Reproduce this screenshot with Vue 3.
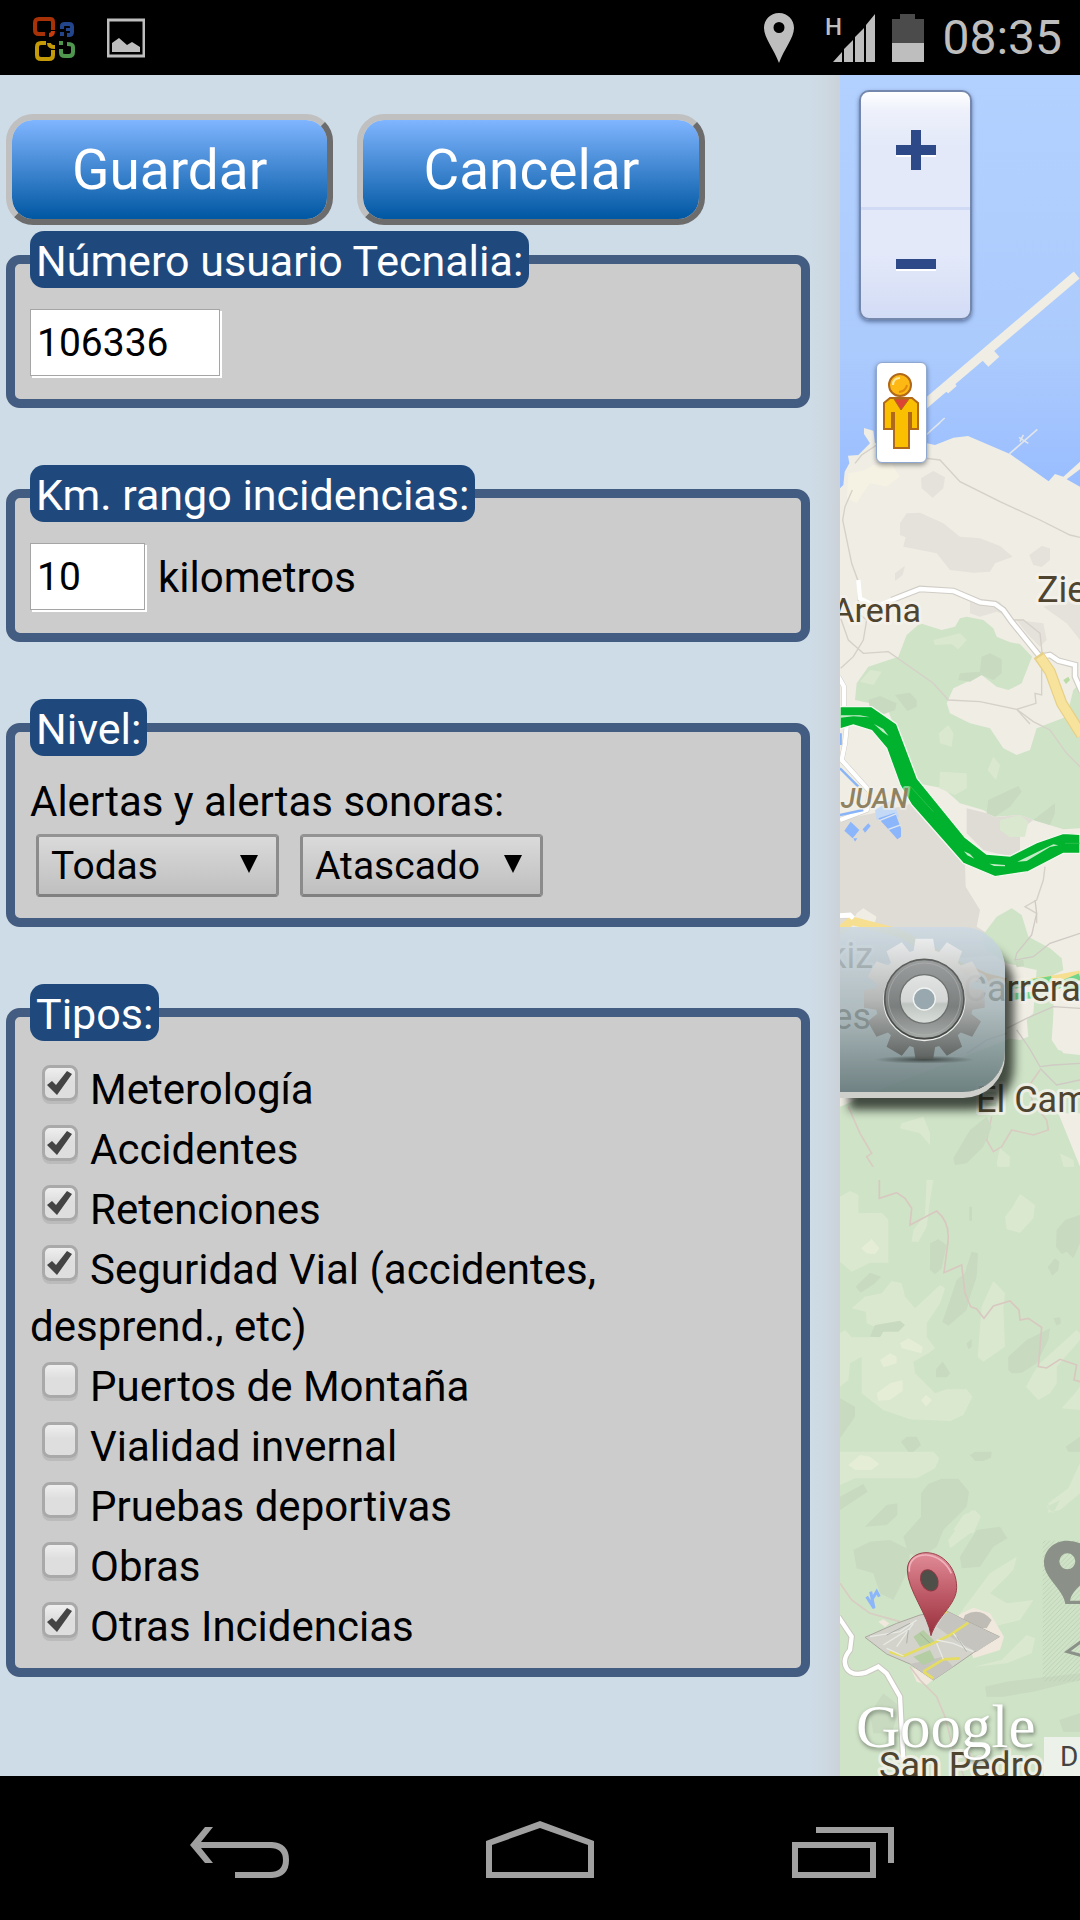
<script setup>
import { reactive, ref } from 'vue'

const usuario = ref('106336')
const rango = ref('10')
const alertas = ref('Todas')
const sonoras = ref('Atascado')

const tipos = reactive([
  { id: 'meteo', nombre: 'Meterología', activo: true },
  { id: 'accidentes', nombre: 'Accidentes', activo: true },
  { id: 'retenciones', nombre: 'Retenciones', activo: true },
  { id: 'seguridad', nombre: 'Seguridad Vial (accidentes,\ndesprend., etc)', activo: true },
  { id: 'puertos', nombre: 'Puertos de Montaña', activo: false },
  { id: 'invernal', nombre: 'Vialidad invernal', activo: false },
  { id: 'deportivas', nombre: 'Pruebas deportivas', activo: false },
  { id: 'obras', nombre: 'Obras', activo: false },
  { id: 'otras', nombre: 'Otras Incidencias', activo: true },
])

// Twelve-tooth gear outline around the origin
function gearPath(teeth, outer, root) {
  const pts = []
  const at = (r, a) => `${(r * Math.sin(a)).toFixed(1)},${(-r * Math.cos(a)).toFixed(1)}`
  for (let i = 0; i < teeth; i++) {
    const a = (i * 2 * Math.PI) / teeth
    pts.push(at(root, a - 0.22), at(outer, a - 0.145), at(outer, a + 0.145), at(root, a + 0.22))
  }
  return `M${pts.join('L')}Z`
}
const gear = gearPath(12, 183, 148)
</script>

<template>
  <div class="screen">
    <header class="status">
      <svg class="ico" width="46" height="46" viewBox="0 0 46 46" fill="none" stroke-width="4">
        <path d="M21 15V7Q21 4 18 4H7Q3 4 3 8V15Q3 19 7 19H13" stroke="#a83208" />
        <path d="M17 20Q21 20 21 16" stroke="#c83c0c" />
        <path d="M30 14V11Q30 9 33 9H37Q40 9 40 12V17Q40 20 37 20H35M30 17V21M36 16V13" stroke="#23458c" />
        <path d="M14 28H9Q5 28 5 32V40Q5 44 9 44H17Q21 44 21 40V35M17 28Q17 32 23 32" stroke="#c49a08" />
        <path d="M29 34V38Q29 41 33 41H37Q41 41 41 37V32Q41 29 35 29M29 26V30" stroke="#4f964f" />
      </svg>
      <svg class="ico picture" width="38" height="40" viewBox="0 0 38 40">
        <rect x="1" y="2" width="36" height="36" fill="none" stroke="#bebebe" stroke-width="3" />
        <path d="M5 34V25L12 20L20 27L25 24L33 29V34Z" fill="#bebebe" />
      </svg>
      <span class="grow"></span>
      <svg width="32" height="51" viewBox="0 0 32 51">
        <path fill="#bebebe" fill-rule="evenodd" d="M16 1C7 1 1 8 1 16C1 26 11 37 16 51C21 37 31 26 31 16C31 8 25 1 16 1ZM16 10A5 5 0 1 1 16 21A5 5 0 1 1 16 10Z" />
      </svg>
      <svg class="signal" width="52" height="50" viewBox="0 0 52 50" fill="#bebebe">
        <text x="0" y="22" font-size="24" font-weight="500">H</text>
        <path d="M8 49L17 39V49ZM19 49V36L28 27V49ZM30 49V24L39 15V49ZM41 49V12L50 1V49Z" />
      </svg>
      <svg class="battery" width="32" height="50" viewBox="0 0 32 50">
        <path d="M0 6H8V1H23V6H32V30H0Z" fill="#4b4b4b" />
        <path d="M0 30H32V49H0Z" fill="#bebebe" />
      </svg>
      <time class="clock">08:35</time>
    </header>

    <main class="body">
      <form class="panel" @submit.prevent>
        <div class="actions">
          <button class="action" type="submit">Guardar</button>
          <button class="action" type="button">Cancelar</button>
        </div>

        <fieldset class="group">
          <legend><label for="usuario">Número usuario Tecnalia:</label></legend>
          <div class="line">
            <input id="usuario" v-model="usuario" class="field wide" type="text" />
          </div>
        </fieldset>

        <fieldset class="group">
          <legend>Km. rango incidencias:</legend>
          <div class="line">
            <input id="rango" v-model="rango" class="field short" type="text" />
            <label for="rango">kilometros</label>
          </div>
        </fieldset>

        <fieldset class="group">
          <legend>Nivel:</legend>
          <label class="caption" for="alertas">Alertas y alertas sonoras:</label>
          <div class="selects">
            <span class="pick">
              <select id="alertas" v-model="alertas">
                <option>Todas</option>
              </select>
            </span>
            <span class="pick">
              <select id="sonoras" v-model="sonoras" aria-label="Alertas sonoras">
                <option>Atascado</option>
              </select>
            </span>
          </div>
        </fieldset>

        <fieldset class="group tipos">
          <legend>Tipos:</legend>
          <label v-for="t in tipos" :key="t.id" class="tipo"><input v-model="t.activo" type="checkbox" />{{ t.nombre }}</label>
        </fieldset>
      </form>

      <section class="map" aria-label="Mapa">
        <svg class="terrain" viewBox="0 0 240 1701" preserveAspectRatio="xMinYMin slice">
          <defs>
            <linearGradient id="sea" x1="0" y1="0" x2="0" y2="1">
              <stop offset="0" stop-color="#b3d1ff" />
              <stop offset="0.65" stop-color="#accbfd" />
              <stop offset="1" stop-color="#98bcff" />
            </linearGradient>
            <linearGradient id="pinRed" x1="0" y1="0" x2="0" y2="1">
              <stop offset="0" stop-color="#e08c98" />
              <stop offset="0.45" stop-color="#c25f6c" />
              <stop offset="1" stop-color="#982f3c" />
            </linearGradient>
            <pattern id="hatch" width="14" height="14" patternUnits="userSpaceOnUse">
              <path d="M0 14L14 0" stroke="#b7c8ae" stroke-width="2" />
            </pattern>
          </defs>
          <rect width="240" height="1701" fill="#efede4" />
          <rect width="240" height="420" fill="url(#sea)" />

          <g transform="translate(-20 -15) scale(0.33333)">
            <!-- Breakwaters and coastline -->
            <path d="M300 1045L770 645" fill="none" stroke="#efede4" stroke-width="27" />
            <path d="M470 905L488 902L505 920L538 890L522 872L528 850ZM362 985L385 1000L410 978L395 955Z" fill="#efede4" />
            <path d="M780 1205L730 1250L705 1242L686 1264L570 1182L444 1128L400 1133L345 1155L300 1145L260 1100L165 1150L160 1112L132 1104V1122L150 1150L115 1185L84 1187L88 1210L74 1235L70 1275L60 1285V2500H780V1280L740 1258L780 1228Z" fill="#efede4" />
            <path d="M568 1182L652 1108M597 1132L625 1150M610 1125L600 1145M302 1140L374 1074M340 1105L360 1088" fill="none" stroke="#dfe5ea" stroke-width="5" />

            <g transform="translate(0 1080)">
              <path d="M80 235L85 160L135 150L160 135L215 130L240 170L200 200L150 190L110 250Z" fill="#f5f1e3" />
              <path d="M340 153L375 172L370 205L338 233L305 205L303 175ZM260 280L300 278L370 310L420 350L480 355L540 378L578 410L525 430L510 455L460 458L390 450L350 400L250 380L257 352L240 345V310ZM665 378L690 385V420L665 441L640 435L628 405ZM255 437L248 465L225 483V460ZM450 540L540 545L555 585L530 575L480 590L450 580ZM590 600L670 610L680 660L660 680L620 640ZM670 560L780 530V660L740 610Z" fill="#e5e2db" />
              <path d="M235 710L260 645L300 610L365 630L405 620L420 595L440 590L490 600L520 625L530 650L570 667L600 672L636 710L605 790L565 810L530 800L485 765L400 805L380 850L390 880L450 910L510 925L550 985L590 1005L630 990L650 925L700 905L740 890L760 810L780 790V1225L730 1228L640 1200L600 1185L525 1190L490 1170L420 1150L370 1105L290 1090L200 860L105 840L110 790L145 740Z" fill="#cfe3c7" />
              <path d="M60 1200L160 1180L280 1150L435 1330L437 1400L480 1470L470 1520L600 1600L60 1640ZM440 1165L500 1180L525 1192L600 1185L640 1200L600 1230L600 1290L570 1310L490 1290L440 1240Z" fill="#dfdbd5" />
              <path d="M485 710L510 700L545 718V760L520 780L485 765L450 785L415 780L420 760L480 755ZM145 840L180 828L230 850L225 870L190 883L150 865ZM225 825L270 818L290 840V860L262 873ZM505 1140L595 1098L605 1115L570 1160L525 1190L500 1180ZM640 1200L705 1150V1180L690 1215Z" fill="#c8dac0" />
              <path d="M340 660L420 640L440 660L415 688L395 672L345 675ZM150 750L185 755L160 795L120 785ZM385 915L400 940L395 980L360 970L357 940ZM520 1010L540 1035L528 1080L503 1050ZM360 1055L440 1060V1105L405 1125L358 1105ZM540 1200L600 1185L625 1205L615 1250L570 1252L540 1230Z" fill="#dbe8d0" />
              <g fill="none" stroke="#d5d0c8" stroke-width="4">
                <path d="M105 130L125 105L170 75M320 115L360 120L420 185L540 245L660 300L750 345L780 352M97 210L75 260L68 300L95 430L115 485V580L140 600L130 660L100 710L62 745M62 595L85 660L130 700L205 695L340 790L385 840L480 845L590 868L640 905L690 930L740 1000L780 1040M665 720V825L645 820L648 850L590 868L630 912M575 600L610 600L660 640L668 715M675 1340L670 1380L650 1440L615 1460L650 1480V1510" />
              </g>
              <g fill="none" stroke="#d0cdc6" stroke-width="20">
                <path d="M215 540L300 507L400 513L480 547L525 552L550 570L575 605L660 710L690 705L715 722L765 735V770L785 815" />
                <path d="M55 770L72 800V870M80 920L75 970L65 1020L150 1115L140 1170L60 1200M60 1487L90 1487" stroke-width="16" />
              </g>
              <g fill="none" stroke="#fff" stroke-width="13">
                <path d="M115 480L120 535L170 560L215 540L300 507L400 513L480 547L525 552L550 570L575 605L660 710L690 705L715 722L765 735V770L785 815" />
                <path d="M55 770L72 800V870M80 920L75 970L65 1020L150 1115L140 1170L60 1200M60 1487L90 1487" />
              </g>
              <path d="M655 705L690 755L725 850L785 945" fill="none" stroke="#e6cf86" stroke-width="34" />
              <path d="M660 710L690 755L725 850L785 945" fill="none" stroke="#f8e39c" stroke-width="27" />
              <path d="M730 780L745 770L750 780L738 792Z" fill="#b9dca4" />
              <path d="M60 1045L115 1100M60 1185L130 1170M62 940V975" stroke="#8ab4f8" stroke-width="7" fill="none" />
              <path d="M165 1170L215 1140L238 1190L170 1200Z" fill="#c3d9f5" />
              <path d="M92 1205L118 1230L98 1255L73 1232ZM128 1228L145 1210L152 1218L135 1238ZM175 1195L225 1178L243 1225V1250L232 1258L205 1228ZM100 1255L112 1255L105 1265Z" fill="#8cb6fb" />
              <path d="M178 1202L228 1182M205 1228L242 1215" stroke="#dfe6ee" stroke-width="4" />
              <path d="M60 860H155L230 912L292 1076L435 1252L500 1302L570 1308L650 1268L730 1240L780 1243V1300H730L625 1355L525 1370L430 1330L275 1155L240 1095L200 985L155 932L100 915L60 927Z" fill="#00b22d" stroke="#f3f7ee" stroke-width="4" />
              <path d="M62 886H120L150 892L100 889L62 893ZM162 912L190 927L206 948L188 936ZM432 1294L450 1302L463 1316L442 1306ZM508 1331L555 1335V1339L522 1338ZM592 1325L700 1273L715 1276L690 1281L620 1323Z" fill="#c2ebc6" />
              <path d="M270 1098L340 1175M735 1270H780" stroke="#3cc45a" stroke-width="2" />
            </g>

            <g transform="translate(0 2520)">
              <path d="M485 110L530 50L575 25L605 45L625 110L690 145L725 175L730 210L700 225V340L705 420L730 460L780 465V900H60V620L200 560L560 420L640 340L650 210L560 190L500 150Z" fill="#cfe3c7" />
              <path d="M560 350L620 355L625 410L600 420L560 415ZM715 640L780 640V800ZM110 40L130 25L170 50L160 82H90Z" fill="#efede4" />
              <path d="M700 345L780 320V465L715 450L695 420Z" fill="#efede4" />
              <path d="M55 95L95 62L240 100L430 205L580 265" fill="none" stroke="#f6df91" stroke-width="26" />
              <path d="M60 47L90 45L100 55" fill="none" stroke="#fff" stroke-width="14" />
              <path d="M555 255L700 235L780 220" fill="none" stroke="#f6df91" stroke-width="18" />
              <path d="M420 205L460 200L500 220L560 235V260L500 255L440 235Z" fill="#f0a050" />
              <path d="M560 260L695 238M700 262L780 230M570 290L640 285M730 265L780 262" fill="none" stroke="#71d68b" stroke-width="20" />
              <g fill="none" stroke="#cfcac4" stroke-width="4">
                <path d="M645 0L650 40L635 105L590 160L585 180L640 170L690 130L780 100M560 385L620 355L700 320L780 325M590 390L625 440L660 500L700 495L780 490M660 505L710 555L780 540M440 460L500 420L560 400" />
              </g>
              <path d="M85 620L120 700L155 760L140 770L175 825V895M515 650L500 720L520 755L545 740L575 690L640 705L685 690L680 660L640 610L625 560L660 510" fill="none" stroke="#d8cbc2" stroke-width="5" />
              <path d="M400 775L450 690L500 650L515 680L490 740L440 790L405 795ZM585 182L610 180L612 198L590 202Z" fill="#c8dac0" />
              <path d="M245 670L310 650L330 700V735L300 700L240 685ZM540 745L570 770L565 850L540 840L530 790ZM720 760L760 780L768 830L740 835ZM320 820L345 815L335 900H310Z" fill="#dbe8d0" />
              <path d="M215 290L250 325L285 365L240 345Z" fill="#7da4f0" />
            </g>

            <g transform="translate(0 3360)">
              <path d="M50 -40H790V1420H50Z" fill="#cfe3c7" />
              <g fill="#dbe8d0">
                <path d="M60 50L90 33L115 45V100L185 98L205 120V248H150L95 275L60 245ZM320 0H340L330 60L320 140L295 185H275L280 150L315 105ZM600 42L645 75L640 115L600 158L560 148L555 110L575 85ZM95 385L135 350L185 340L215 303L245 310L255 350L285 385L360 315L375 325L360 370L320 430V470L345 505L325 520L280 545L285 580L345 640L380 628L440 628L457 650L430 705L390 723L270 718L190 690L125 640V530L90 550L85 600L60 620V460L75 450L95 472H150L165 440L140 430L138 395ZM485 380L520 303L555 340L550 385L555 500L490 545L473 530ZM660 550L770 450L780 460V480L710 560V610L690 640L655 660L618 620L640 580ZM725 685L765 640L780 620V690ZM60 815H340L358 835L345 865L290 895H105L60 915ZM780 850L745 925L685 970V998L720 990L780 940ZM400 1050L430 1005L465 990L482 1010L460 1060ZM400 1060L455 990L480 1005L450 1060L390 1105L385 1080ZM420 1300L510 1180L590 1130L580 1170L510 1240L560 1270L640 1260L600 1320L480 1350ZM680 980L720 960L700 1000Z" />
              </g>
              <g fill="#c8dac0">
                <path d="M150 470L165 435L240 422L255 435L235 455L190 455L180 472ZM330 190L355 178L380 195L365 265L345 283L330 270ZM440 260L455 215L474 220L470 290L450 350L440 390L385 437L367 425L390 360L410 300L435 280ZM448 80H456V122H448ZM710 150L735 120L780 105V190L760 235L740 215L725 222L708 200ZM683 262L705 235L718 245L715 270L697 287ZM107 320L150 278L183 290L165 310L122 338ZM440 490L455 477V500L445 508ZM565 530L620 480L690 445L685 480L650 550L605 578L575 580L565 570ZM368 545L391 580L380 592H348V568ZM60 655L105 680V710L60 775ZM243 785L260 770H290L303 795L280 815H265ZM450 825L465 815H515L513 833L490 843H465ZM737 800L780 770V815H745ZM303 940L325 912L365 896H415L447 935L440 980L370 1050L350 1100L305 1130L265 1120L250 1070L303 1010ZM60 950L130 912L143 935L60 990ZM135 1040L200 975L232 970V1005L200 1035ZM700 415L720 412L723 430L710 437Z" />
                <path d="M420 1130L470 1050L540 1040L562 1075L520 1100L480 1160L425 1165ZM100 1110L150 1085L210 1080L270 1110L265 1170L220 1260L180 1240L160 1180L110 1165ZM495 1530L540 1510L620 1500L780 1480V1510L640 1530L540 1550Z" />
              </g>
              <path d="M123 205L155 177L178 205L165 223L140 220ZM240 490L265 475L308 500L305 520L245 505ZM180 540L210 520L230 530V550L190 562ZM170 640L210 610L248 600V632L210 660L175 662ZM303 660L318 645L336 660L318 680ZM85 855L120 825L150 830L178 852L155 870H105Z" fill="#e5edd6" />
              <path d="M178 0V55L230 38L255 55L275 85L270 135L350 93Q395 130 382 200L372 278L425 255L435 340L452 380L470 387L492 415L520 378L570 363L597 390L600 420L625 415L665 442L655 560L680 564L720 538L770 555L762 600L780 605" fill="none" stroke="#d8c8c0" stroke-width="5" />
            </g>

            <g transform="translate(0 4320)">
              <path d="M50 440H790V900H50Z" fill="#cfe3c7" />
              <path d="M495 560L560 545L780 520V540L700 560L640 575L550 590H500ZM150 640L190 580L240 620L215 700L160 700ZM718 660L780 640V695H730Z" fill="#c8dac0" />
              <path d="M460 500L545 480L620 405L645 415L635 460L560 490Z" fill="#dbe8d0" />
              <path d="M415 345L460 323L510 340L552 410L540 450L460 475ZM270 500L350 530L320 555L290 545ZM175 365L190 358L208 370L195 382Z" fill="#f0e8dc" />
              <path d="M60 250L95 300L150 340L240 365M270 500L300 540L350 590L375 650L400 750L440 850" fill="none" stroke="#d9ccc3" stroke-width="5" />
              <path d="M152 275L162 325L140 290M155 300L170 275L178 290" fill="none" stroke="#8cb6fb" stroke-width="9" />
              <g fill="none">
                <path d="M55 350L95 410L90 450Q65 480 80 505T140 517L175 500L200 520L240 590L250 780L275 780" stroke="#c9c7bf" stroke-width="19" />
                <path d="M55 350L95 410L90 450Q65 480 80 505T140 517L175 500L200 520L240 590L250 780L275 780" stroke="#fff" stroke-width="13" />
              </g>
            </g>
          </g>

          <!-- Place names -->
          <g class="places">
            <text x="81" y="547" font-size="34" text-anchor="end">Arena</text>
            <text x="197" y="527" font-size="36">Zie</text>
            <text x="68" y="733" font-size="27" text-anchor="end" class="river">JUAN</text>
            <text x="33" y="893" font-size="36" text-anchor="end">kiz</text>
            <text x="57" y="926" font-size="36">Las Carrera</text>
            <text x="31" y="954" font-size="36" text-anchor="end">es</text>
            <text x="136" y="1037" font-size="36">El Cam</text>
            <text x="39" y="1703" font-size="36">San Pedro</text>
          </g>
          <text class="brand" x="16" y="1672" font-size="61">Google</text>

          <g transform="translate(-20 1425) scale(0.33333)">
            <!-- Folded map with pin -->
            <path d="M435 345Q480 320 515 360L500 385L420 380Z" fill="#aaa9a4" opacity=".7" />
            <path d="M135 412L230 370L300 345L380 333L450 368L538 410L460 458L400 500L340 540L270 492L200 462Z" fill="#d3d3cc" stroke="#aaa79f" stroke-width="3" />
            <path d="M380 333L450 368L538 410L470 455L420 430L350 380ZM270 492L340 540L400 500L370 470Z" fill="#c5c4bf" />
            <path d="M280 410L310 390L345 425L300 440ZM280 470L330 450L345 480L310 495Z" fill="#b4cda2" />
            <path d="M210 456L250 468L350 425L390 405L445 368M310 515L370 478L420 475M310 515L340 535M365 340L380 335" fill="none" stroke="#e5dc62" stroke-width="8" />
            <path d="M150 410L240 395L290 360M190 435L270 385M230 440L280 370M350 420L400 430L460 455M400 400L440 450M250 468L200 445M370 478L350 430" fill="none" stroke="#e9e9e4" stroke-width="4" />
            <path d="M200 405L270 370M260 430L265 390M410 410L440 455M300 400L330 430" fill="none" stroke="#999b96" stroke-width="2" />
            <path d="M333 407C325 345 262 270 262 210C262 175 290 158 318 158C370 158 410 205 410 262C410 315 350 350 333 407Z" fill="url(#pinRed)" stroke="#99404b" stroke-width="3" />
            <path d="M268 215C265 180 290 164 318 165C350 166 380 188 394 220" fill="none" stroke="#efb3bb" stroke-width="5" />
            <ellipse cx="328" cy="241" rx="25" ry="33" transform="rotate(-24 328 241)" fill="#4d4f48" stroke="#8c3943" stroke-width="3" />
            <!-- Disabled marker tool -->
            <rect x="668" y="122" width="122" height="422" fill="url(#hatch)" />
            <path fill-rule="evenodd" d="M742 122C700 122 672 152 672 188C672 235 733 270 736 312H790V302H750C755 275 780 260 790 245V135Q770 122 742 122ZM742 160A24 24 0 1 1 742 208A24 24 0 1 1 742 160Z" fill="#8b9188" />
            <path d="M790 420L742 455L790 468" fill="none" stroke="#8b9188" stroke-width="9" />
          </g>
        </svg>

        <div class="zoom">
          <button type="button" aria-label="Acercar">
            <svg width="42" height="44" viewBox="0 0 42 44"><path d="M1 24H41" stroke="#fff" stroke-width="10" /><path d="M1 22H41M21 2V42" stroke="#2d4987" stroke-width="10" /></svg>
          </button>
          <button type="button" aria-label="Alejar">
            <svg width="42" height="44" viewBox="0 0 42 44"><path d="M1 24H41" stroke="#fff" stroke-width="10" /><path d="M1 22H41" stroke="#2d4987" stroke-width="10" /></svg>
          </button>
        </div>

        <button class="pegman" type="button" aria-label="Street View">
          <svg width="36" height="78" viewBox="0 0 36 78" stroke="#b0681a" stroke-width="1">
            <path d="M7 26H29L35 31V57H28V41H26V76H11V41H9V57H1V31Z" fill="#f9bf00" stroke-width="2" />
            <path d="M11 27H26L18 38Z" fill="#dc4534" />
            <circle cx="17" cy="13" r="11" fill="#fdb813" stroke-width="2" />
            <path d="M10 13Q10 6 17 6" fill="none" stroke="#ffe9a0" stroke-width="2" />
            <path d="M24 13Q23 19 16 20" fill="none" stroke="#e08a10" stroke-width="2" />
          </svg>
        </button>

        <button class="settings" type="button" aria-label="Configuración">
          <svg width="165" height="165" viewBox="60 82 495 495">
            <defs>
              <linearGradient id="gearBody" x1="0" y1="0" x2="0" y2="1">
                <stop offset="0" stop-color="#efefef" />
                <stop offset="0.5" stop-color="#b5b6b4" />
                <stop offset="1" stop-color="#565956" />
              </linearGradient>
              <linearGradient id="gearRing" x1="0" y1="0" x2="0" y2="1">
                <stop offset="0" stop-color="#8c8f90" />
                <stop offset="0.6" stop-color="#6e7271" />
                <stop offset="1" stop-color="#b4b8b5" />
              </linearGradient>
              <linearGradient id="gearHub" x1="0" y1="0" x2="0" y2="1">
                <stop offset="0" stop-color="#f0f2f1" />
                <stop offset="0.55" stop-color="#e2e5e3" />
                <stop offset="0.6" stop-color="#cbd1cd" />
                <stop offset="1" stop-color="#e6ebe7" />
              </linearGradient>
              <radialGradient id="gearShade">
                <stop offset="0" stop-color="#2c3330" stop-opacity=".8" />
                <stop offset="1" stop-color="#2c3330" stop-opacity="0" />
              </radialGradient>
            </defs>
            <ellipse cx="313" cy="480" rx="150" ry="12" fill="url(#gearShade)" />
            <g transform="translate(313 298)">
              <path :d="gear" fill="url(#gearBody)" opacity=".85" />
              <circle r="121" cy="3" fill="none" stroke="#e9ece8" stroke-width="5" />
              <circle r="119" fill="url(#gearRing)" stroke="#353835" stroke-width="5" opacity=".78" />
              <circle r="108" fill="none" stroke="#b2b5b3" stroke-width="3" opacity=".6" />
              <circle r="73" fill="url(#gearHub)" stroke="#696d6b" stroke-width="4" opacity=".85" />
              <circle r="33" fill="#99a8ae" stroke="#f1f4f2" stroke-width="4" />
            </g>
          </svg>
        </button>

        <a class="terms" href="#">D</a>
      </section>
    </main>

    <nav class="nav">
      <button type="button" aria-label="Atrás">
        <svg width="108" height="60" viewBox="0 0 108 60" fill="#a0a0a0">
          <path d="M4 27L19 9H27L15 24H86Q103 25 103 42T86 60H49V54H84Q97 54 97 42T84 30H15L27 45H19Z" />
        </svg>
      </button>
      <button type="button" aria-label="Inicio">
        <svg width="108" height="60" viewBox="0 0 108 60" fill="#a0a0a0">
          <path fill-rule="evenodd" d="M54 3L108 23V60H0V23ZM54 10L102 27V54H6V27Z" />
        </svg>
      </button>
      <button type="button" aria-label="Recientes">
        <svg width="108" height="60" viewBox="0 0 108 60" fill="#a0a0a0">
          <path fill-rule="evenodd" d="M6 24H90V60H6ZM12 30V54H84V30ZM30 9H108V45H102V15H30Z" />
        </svg>
      </button>
    </nav>
  </div>
</template>

<style>
body {
  margin: 0;
  background: #000;
}
</style>

<style scoped>
.screen {
  display: flex;
  flex-direction: column;
  min-height: 100vh;
  font-family: Roboto, 'Noto Sans', sans-serif;
  font-size: 42px;
  color: #000;
}
.screen svg {
  display: block;
  flex: none;
}
button {
  font: inherit;
  cursor: pointer;
}

/* Status bar */
.status {
  display: flex;
  align-items: center;
  height: 75px;
  padding: 0 18px 0 32px;
  background: #000;
}
.picture {
  margin-left: 29px;
}
.grow {
  flex: 1;
}
.signal {
  margin-left: 30px;
}
.battery {
  margin: 0 18px 0 15px;
}
.clock {
  font-size: 48px;
  line-height: 72px;
  color: #bebebe;
}

/* Layout */
.body {
  display: flex;
  flex: 1;
}
.panel {
  flex: 1;
  min-width: 0;
  padding: 39px 30px 42px 6px;
  box-sizing: border-box;
  background: linear-gradient(to left, #cbd1d8 0, #cdd8e1 14px, #cedce7 30px);
}
.actions {
  display: flex;
  gap: 24px;
  margin-bottom: 6px;
}
.action {
  height: 111px;
  padding: 0 60px;
  border: 6px solid;
  border-color: #c0c0c0 #6c6c6c #6c6c6c #c0c0c0;
  border-radius: 27px;
  background: linear-gradient(#80b5ff, #0057a2);
  background-clip: padding-box;
  color: #fff;
  font-size: 55px;
}

/* Form groups */
.group {
  min-width: 0;
  margin: 0 0 57px;
  padding: 0 15px 21px;
  border: 9px solid #435c82;
  border-radius: 14px;
  background: #ccc;
}
legend {
  padding: 6px 6px 2px;
  border-radius: 14px;
  background: #1f497d;
  color: #fff;
  font-size: 43px;
  line-height: 49px;
}
.line {
  display: flex;
  align-items: center;
  gap: 11px;
  padding-top: 21px;
}
.field {
  box-sizing: border-box;
  height: 67px;
  margin: 0 2px 2px 0;
  padding: 0 6px;
  border: 1px solid #a5a5a5;
  border-radius: 0;
  outline: 0;
  background: #fff;
  box-shadow: 2px 2px 0 #fff;
  font: 39px Roboto, 'Noto Sans', sans-serif;
  color: #000;
}
.wide {
  width: 190px;
}
.short {
  width: 115px;
}
.caption {
  display: block;
  padding-top: 17px;
  line-height: 57px;
}
.selects {
  display: flex;
  gap: 21px;
  padding: 4px 0 0 6px;
}
.pick {
  position: relative;
}
.pick::after {
  content: '';
  position: absolute;
  top: 21px;
  right: 21px;
  width: 18px;
  height: 18px;
  background: #000;
  clip-path: polygon(0 0, 100% 0, 50% 100%);
  pointer-events: none;
}
select {
  display: block;
  appearance: none;
  box-sizing: border-box;
  width: 243px;
  height: 63px;
  padding: 0 12px;
  border: 3px solid;
  border-color: #939393 #8b8b8b #808080;
  border-radius: 4px;
  background: linear-gradient(#dadada, #bfbfbf);
  font: 39px Roboto, 'Noto Sans', sans-serif;
  color: #000;
}
.tipos {
  padding-top: 17px;
  padding-bottom: 13px;
}
.tipo {
  display: block;
  padding-top: 3px;
  line-height: 57px;
  white-space: pre-line;
}
.tipo input {
  appearance: none;
  box-sizing: border-box;
  width: 36px;
  height: 36px;
  margin: 0 12px;
  border: 3px solid #a9a9a9;
  border-radius: 8px;
  background: linear-gradient(#efefef, #dedede 45%);
  box-shadow: 0 3px 0 #bbb;
  vertical-align: 3px;
}
.tipo input::before {
  content: '';
  display: block;
  width: 30px;
  height: 30px;
}
.tipo input:checked::before {
  background: #444;
  clip-path: polygon(2px 17px, 7px 13px, 11px 17px, 22px 3px, 27px 6px, 12px 27px);
}

/* Map */
.map {
  position: relative;
  flex: 0 0 240px;
  overflow: hidden;
  background: #cfe3c7;
}
.terrain {
  position: absolute;
  inset: 0;
  width: 100%;
  height: 100%;
}
.places text {
  fill: #4e442f;
  stroke: #f5f3ec;
  stroke-width: 6px;
  stroke-opacity: 0.8;
  stroke-linejoin: round;
  paint-order: stroke;
}
.places .river {
  fill: #8f8263;
  stroke-width: 4px;
  stroke-opacity: 0.5;
  font-style: italic;
  font-weight: 500;
}
.brand {
  fill: #fff;
  font-family: 'Liberation Serif', serif;
  filter: drop-shadow(1px 2px 2px #6f7a6b);
}
.zoom {
  position: absolute;
  top: 15px;
  left: 19px;
  width: 113px;
  height: 230px;
  box-sizing: border-box;
  display: flex;
  flex-direction: column;
  overflow: hidden;
  border: 2px solid #7488ad;
  border-radius: 10px;
  background: linear-gradient(#fff, #eef1fb 8%, #e3e9f9 24%, #e3e9f9 72%, #d3dcf6);
  box-shadow: 0 2px 4px rgba(40, 60, 100, 0.6);
}
.zoom button {
  flex: 1;
  display: grid;
  place-items: center;
  padding: 0;
  border: 0;
  background: none;
}
.zoom button:first-child {
  flex: 0 0 115px;
}
.zoom button + button {
  border-top: 3px solid #d0daf5;
}
.pegman {
  position: absolute;
  top: 287px;
  left: 36px;
  width: 51px;
  height: 101px;
  box-sizing: border-box;
  display: grid;
  place-items: center;
  padding: 0 2px 4px 0;
  border: 1px solid #8fa8d2;
  border-radius: 6px;
  background: #fff;
  box-shadow: 0 2px 5px rgba(0, 0, 0, 0.4);
}
.settings {
  position: absolute;
  top: 852px;
  left: 0;
  padding: 0;
  border: 0;
  border-radius: 0 42px 42px 0;
  background: linear-gradient(rgba(204, 217, 227, 0.88), rgba(155, 172, 178, 0.76) 50%, rgba(104, 123, 125, 0.94));
  box-shadow: 0 6px 0 #cfd0cb, 9px 18px 10px rgba(20, 25, 20, 0.75);
}
.terms {
  position: absolute;
  right: 0;
  bottom: 0;
  width: 36px;
  box-sizing: border-box;
  padding-left: 16px;
  background: rgba(245, 245, 245, 0.75);
  color: #444;
  font-size: 28px;
  line-height: 39px;
  text-decoration: none;
}

/* System navigation */
.nav {
  display: flex;
  justify-content: center;
  align-items: center;
  gap: 192px;
  height: 144px;
  background: #000;
}
.nav button {
  padding: 0;
  border: 0;
  background: none;
}
</style>
